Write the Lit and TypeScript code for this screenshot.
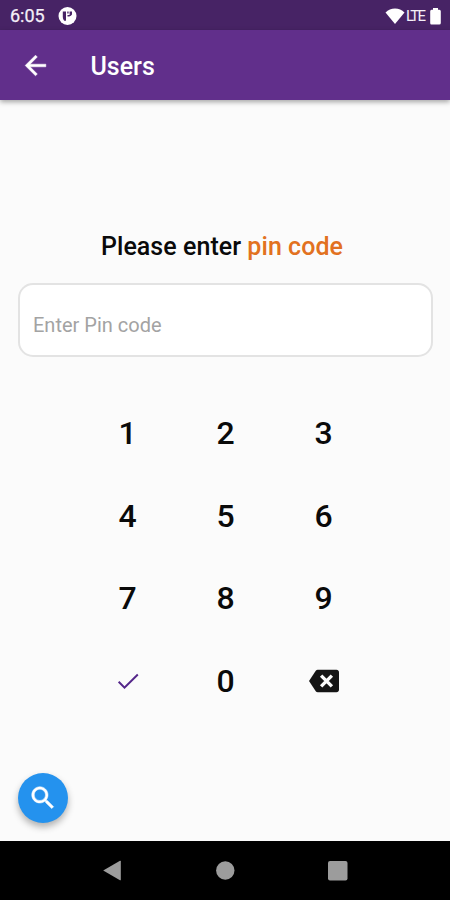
import { LitElement, html, css } from "lit";
import { customElement } from "lit/decorators.js";

@customElement("status-bar")
class StatusBar extends LitElement {
  static styles = css`
    :host { display: flex; justify-content: space-between; align-items: center; height: 30px; box-sizing: border-box; padding: 2px 9px 0 10px; background: #472365; color: #f4eff8; }
    .side { display: flex; align-items: center; }
    .time { font-size: 18px; line-height: 28px; width: 48px; -webkit-text-stroke: 0.25px #f4eff8; }
    .lte { font-size: 15px; line-height: 26px; width: 20px; margin: 0 4px 0 1px; letter-spacing: -1.8px; white-space: nowrap; }
    svg { display: block; fill: #fff; }
  `;
  render() {
    return html`
      <div class="side">
        <span class="time">6:05</span>
        <svg width="19" height="19" viewBox="0 0 19 19">
          <circle cx="9.5" cy="9" r="9" />
          <path d="M4.800 4.500h3.200v9.300H6.200Q4.800 12.500 4.800 10z" fill="#472365" />
          <path d="M9.300 4.500h1.300v2H9.300zM11.600 4.500h2.400v3q-.8 1.800-2.800 1.900H9.500V8h2.100z" fill="#472365" />
        </svg>
      </div>
      <div class="side">
        <svg width="20" height="17" viewBox="0 0 20 17"><path d="M0.500 4.500Q4.500 0.500 10 0.500t9.500 4L10 16z" /></svg>
        <span class="lte">LTE</span>
        <svg width="11" height="17" viewBox="0 0 11 17"><path d="M3 0h5v1.700h1.500q1.300 0 1.300 1.500v11.800q0 1.500-1.500 1.500h-8Q0.200 16.500 0.200 15v-11.800Q0.200 1.700 1.500 1.700H3z" /></svg>
      </div>
    `;
  }
}

@customElement("app-header")
class AppHeader extends LitElement {
  static styles = css`
    :host { display: flex; align-items: center; height: 70px; box-sizing: border-box; padding: 1px 0 0 20px; background: #612f8b; color: #fff; box-shadow: 0 2px 5px rgba(0, 0, 0, 0.35); z-index: 1; }
    svg { display: block; fill: #fff; stroke: #fff; stroke-width: 0.4px; margin-right: 39.500px; }
    .title { font-size: 25px; font-weight: 500; line-height: 32px; padding-top: 2px; }
  `;
  render() {
    return html`
      <svg width="31" height="31" viewBox="0 0 24 24"><path d="M20 11H7.830l5.590-5.590L12 4l-8 8 8 8 1.410-1.410L7.830 13H20v-2z" /></svg>
      <span class="title">Users</span>
    `;
  }
}

@customElement("pin-pad")
class PinPad extends LitElement {
  static styles = css`
    :host { display: grid; grid-template-columns: repeat(3, 98px); grid-auto-rows: 82.5px; justify-content: center; }
    .key { display: flex; align-items: center; justify-content: center; font: 500 32px/40px Roboto, sans-serif; color: #0a0a0a; padding: 0 0 0 1px; border: 0; background: none; }
    .ok { fill: #54268a; }
    .del { fill: #151515; margin-left: 1px; }
    svg { display: block; }
  `;
  render() {
    return html`
      ${[1, 2, 3, 4, 5, 6, 7, 8, 9].map((n) => html`<button class="key">${n}</button>`)}
      <button class="key">
        <svg class="ok" width="28" height="28" viewBox="0 0 24 24"><path d="M9 16.500L4.600 12l-1.190 1.200L9 18.800 21 7l-1.190-1.200z" /></svg>
      </button>
      <button class="key">0</button>
      <button class="key">
        <svg class="del" width="30" height="30" viewBox="0 0 24 24"><path d="M22 3H7c-.690 0-1.230.350-1.590.880L0 12l5.410 8.110c.360.530.900.890 1.590.890h15c1.100 0 2-.900 2-2V5c0-1.100-.900-2-2-2z" /><path d="M9.700 7.700l8.600 8.600M18.300 7.700l-8.600 8.600" stroke="#fbfbfb" stroke-width="2.700" /></svg>
      </button>
    `;
  }
}

@customElement("nav-bar")
class NavBar extends LitElement {
  static styles = css`
    :host { display: flex; align-items: center; justify-content: space-between; height: 59.500px; box-sizing: border-box; padding: 2px 102px 0; background: #000; }
    svg { display: block; fill: #9c9c9c; }
  `;
  render() {
    return html`
      <svg width="20" height="22" viewBox="0 0 20 22"><path d="M1.200 10.500L18 0.800q.8-.3.800.5v18.400q0 .8-.8.500z" /></svg>
      <svg width="20" height="20" viewBox="0 0 20 20"><circle cx="10.300" cy="9.500" r="9.200" /></svg>
      <svg width="20" height="20" viewBox="0 0 20 20"><rect width="19.500" height="19.500" rx="2" /></svg>
    `;
  }
}

@customElement("app-root")
class AppRoot extends LitElement {
  static styles = css`
    :host { display: flex; flex-direction: column; height: 900px; width: 450px; overflow: hidden; background: #fbfbfb; font-family: Roboto, sans-serif; }
    .body { flex: 1; display: flex; flex-direction: column; position: relative; }
    .prompt { margin: 131px 6px 0 0; text-align: center; font-size: 25px; line-height: 32px; font-weight: 500; color: #0a0a0a; white-space: nowrap; letter-spacing: 0.05px; }
    .accent { color: #e27120; }
    .field { margin: 20px 17px 0 18px; height: 74px; box-sizing: border-box; border: 2px solid #e3e3e3; border-radius: 15px; background: #fff; padding: 9px 13px 0; display: flex; align-items: center; font-size: 20px; color: #a3a3a3; }
    .pad { margin-top: 35px; }
    .fab { position: absolute; left: 18px; bottom: 17.500px; width: 50px; height: 50px; border: 0; padding: 0; border-radius: 50%; background: #2492ee; display: flex; align-items: center; justify-content: center; box-shadow: 0 4px 7px rgba(0, 0, 0, 0.3); }
    .fab svg { fill: #fff; stroke: #fff; stroke-width: 0.4px; }
  `;
  render() {
    return html`
      <status-bar></status-bar>
      <app-header></app-header>
      <main class="body">
        <div class="prompt">Please enter <span class="accent">pin code</span></div>
        <div class="field">Enter Pin code</div>
        <pin-pad class="pad"></pin-pad>
        <button class="fab">
          <svg width="30" height="30" viewBox="0 0 24 24"><path d="M15.500 14h-.790l-.280-.270C15.410 12.590 16 11.110 16 9.500 16 5.910 13.090 3 9.500 3S3 5.910 3 9.500 5.910 16 9.500 16c1.610 0 3.090-.590 4.230-1.570l.270.280v.790l5 4.990L20.490 19l-4.990-5zm-6 0C7.010 14 5 11.990 5 9.500S7.010 5 9.500 5 14 7.010 14 9.500 11.990 14 9.500 14z" /></svg>
        </button>
      </main>
      <nav-bar></nav-bar>
    `;
  }
}
